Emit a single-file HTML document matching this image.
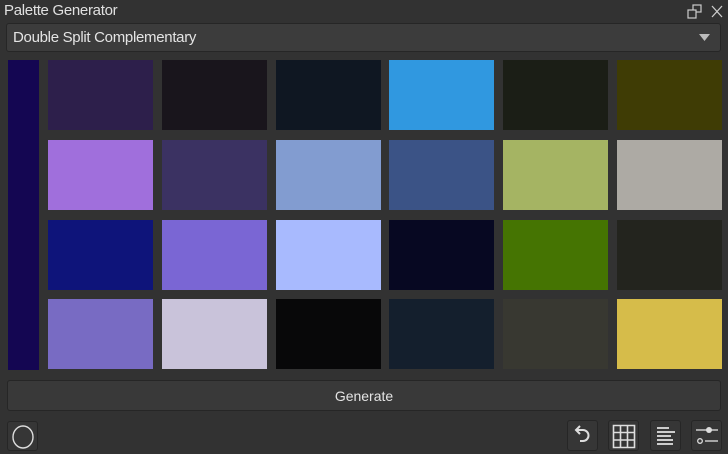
<!DOCTYPE html><html><head><style>
body{margin:0;width:728px;height:454px;background:#323232;font-family:"Liberation Sans",sans-serif;color:#ddd;position:relative;overflow:hidden}
.a{position:absolute}
.s{position:absolute;width:105px;height:70px}
.btn{position:absolute;background:#363636;border:1px solid #262626;border-radius:3px;box-sizing:border-box}
</style></head><body>
<div class="a" style="left:4px;top:2px;font-size:15px;color:#e0e0e0;letter-spacing:-0.3px">Palette Generator</div>
<svg class="a" style="left:686px;top:3px" width="40" height="18"><rect x="7" y="2" width="8" height="7" fill="none" stroke="#ccc" stroke-width="1.2"/><rect x="2" y="7" width="8" height="8" fill="#323232" stroke="#ccc" stroke-width="1.2"/><path d="M26 3L36 14M36 3L26 14" stroke="#ccc" stroke-width="1.3"/></svg>
<div class="btn" style="left:6px;top:23px;width:715px;height:29px;background:#3c3c3c"><span class="a" style="left:6px;top:5px;font-size:15px;color:#e4e4e4;letter-spacing:-0.3px">Double Split Complementary</span><svg class="a" style="left:692px;top:10px" width="12" height="8"><path d="M0 0H11L5.5 7Z" fill="#bbb"/></svg></div>
<div class="a" style="left:8px;top:60px;width:31px;height:310px;background:#140652"></div>
<div class="s" style="left:48px;top:60px;background:#2d1f4b"></div>
<div class="s" style="left:162px;top:60px;background:#19151c"></div>
<div class="s" style="left:276px;top:60px;background:#0f1722"></div>
<div class="s" style="left:389px;top:60px;background:#3098e0"></div>
<div class="s" style="left:503px;top:60px;background:#1b1e16"></div>
<div class="s" style="left:617px;top:60px;background:#3f3c05"></div>
<div class="s" style="left:48px;top:140px;background:#a06fdc"></div>
<div class="s" style="left:162px;top:140px;background:#3b3262"></div>
<div class="s" style="left:276px;top:140px;background:#829cd0"></div>
<div class="s" style="left:389px;top:140px;background:#3b5386"></div>
<div class="s" style="left:503px;top:140px;background:#a5b463"></div>
<div class="s" style="left:617px;top:140px;background:#adaaa4"></div>
<div class="s" style="left:48px;top:220px;background:#0e147a"></div>
<div class="s" style="left:162px;top:220px;background:#7a66d4"></div>
<div class="s" style="left:276px;top:220px;background:#a8bafe"></div>
<div class="s" style="left:389px;top:220px;background:#070822"></div>
<div class="s" style="left:503px;top:220px;background:#457402"></div>
<div class="s" style="left:617px;top:220px;background:#23241e"></div>
<div class="s" style="left:48px;top:299px;background:#786bc3"></div>
<div class="s" style="left:162px;top:299px;background:#c9c3da"></div>
<div class="s" style="left:276px;top:299px;background:#080809"></div>
<div class="s" style="left:389px;top:299px;background:#141f2d"></div>
<div class="s" style="left:503px;top:299px;background:#383831"></div>
<div class="s" style="left:617px;top:299px;background:#d6bc4a"></div>
<div class="btn" style="left:7px;top:380px;width:714px;height:31px;background:#393939"><span class="a" style="left:0;right:0;top:7px;text-align:center;font-size:14px;color:#e4e4e4">Generate</span></div>
<div class="btn" style="left:7px;top:421px;width:31px;height:30px"><svg class="a" style="left:2px;top:2px" width="26" height="26"><ellipse cx="13" cy="13" rx="10" ry="11" fill="none" stroke="#ddd" stroke-width="1.4"/></svg></div>
<div class="btn" style="left:567px;top:420px;width:31px;height:31px"><svg class="a" style="left:0;top:0" width="30" height="30"><path d="M12 5L8 9L12 13M8 9H15A5.5 5.5 0 0 1 15 20H12" fill="none" stroke="#ddd" stroke-width="2"/></svg></div>
<div class="btn" style="left:608px;top:420px;width:31px;height:31px"><svg class="a" style="left:0;top:0" width="30" height="30"><path d="M4.5 4.5H25.5V26.5H4.5ZM4.5 11.5H25.5M4.5 19H25.5M11.5 4.5V26.5M18.5 4.5V26.5" fill="none" stroke="#ddd" stroke-width="1.6"/></svg></div>
<div class="btn" style="left:650px;top:420px;width:31px;height:31px"><svg class="a" style="left:0;top:0" width="30" height="30"><path d="M6 7H18M6 11H24M6 15H20M6 19H22M6 23H22" stroke="#ccc" stroke-width="2"/></svg></div>
<div class="btn" style="left:691px;top:420px;width:31px;height:31px"><svg class="a" style="left:0;top:0" width="30" height="30"><path d="M4 9H26M13 20H26" stroke="#ccc" stroke-width="1.6"/><circle cx="17" cy="9" r="3" fill="#ddd"/><circle cx="8" cy="20" r="2.3" fill="none" stroke="#ddd" stroke-width="1.3"/></svg></div>
</body></html>
